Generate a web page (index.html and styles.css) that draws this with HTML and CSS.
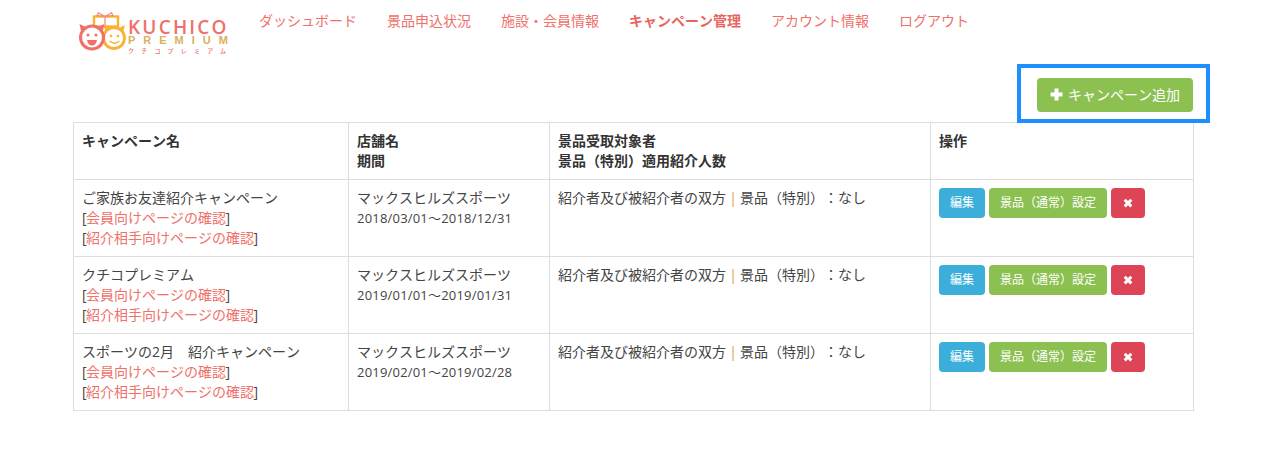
FILE: index.html
```html
<!DOCTYPE html>
<html lang="ja">
<head>
<meta charset="utf-8">
<title>キャンペーン管理</title>
<link rel="stylesheet" href="styles.css">
</head>
<body>
<div class="page">
  <header class="header">
    <a class="logo" href="#">
      <svg class="logo-mark" width="50" height="42" viewBox="0 0 50 42">
        <rect x="16" y="4.5" width="24" height="10" fill="none" stroke="#f9b233" stroke-width="2.4"/>
        <path d="M27 4.5 L20.5 0.8 L19 3.6 L27 4.5 L33.5 0.8 L35 3.6 Z M27 5 V16" fill="none" stroke="#f08a86" stroke-width="1.2"/>
        <circle cx="36" cy="26" r="10.5" fill="#fff" stroke="#f9b233" stroke-width="2.8"/>
        <path d="M26 13 L27.5 20 L32 16 Z M47 13 L45 20 L41 16 Z" fill="#f9b233"/>
        <circle cx="33" cy="24" r="1.3" fill="#f9b233"/>
        <circle cx="40" cy="24" r="1.3" fill="#f9b233"/>
        <path d="M31.5 29 Q36.5 33.5 41.5 29" fill="none" stroke="#f9b233" stroke-width="1.4"/>
        <circle cx="14" cy="25.5" r="11.5" fill="#fff" stroke="#f0706a" stroke-width="3"/>
        <path d="M1.5 12 L3 19 L8 15 Z M26 12 L25 19 L20 15 Z" fill="#f0706a"/>
        <circle cx="10" cy="23" r="1.6" fill="#f0706a"/>
        <circle cx="18" cy="23" r="1.6" fill="#f0706a"/>
        <path d="M9 28 H19 Q18 33.5 14 33.5 Q10 33.5 9 28 Z" fill="#f0706a"/>
      </svg>
      <span class="logo-text">
        <span class="logo-main">KUCHICO</span>
        <span class="logo-sub">PREMIUM</span>
        <span class="logo-kana">クチコプレミアム</span>
      </span>
    </a>
    <nav class="nav">
      <a href="#">ダッシュボード</a>
      <a href="#">景品申込状況</a>
      <a href="#">施設・会員情報</a>
      <a href="#" class="active">キャンペーン管理</a>
      <a href="#">アカウント情報</a>
      <a href="#">ログアウト</a>
    </nav>
  </header>

  <div class="toolbar">
    <a class="btn btn-add" href="#"><svg class="plus" width="13" height="13" viewBox="0 0 13 13"><path d="M4.5 0.5h4v4h4v4h-4v4h-4v-4h-4v-4h4z" fill="#fff"/></svg>キャンペーン追加</a>
    <div class="highlight"></div>
  </div>

  <table class="table">
    <colgroup>
      <col class="c1"><col class="c2"><col class="c3"><col class="c4">
    </colgroup>
    <thead>
      <tr>
        <th>キャンペーン名</th>
        <th>店舗名<br>期間</th>
        <th>景品受取対象者<br>景品（特別）適用紹介人数</th>
        <th>操作</th>
      </tr>
    </thead>
    <tbody>
      <tr>
        <td>ご家族お友達紹介キャンペーン<br>[<a href="#">会員向けページの確認</a>]<br>[<a href="#">紹介相手向けページの確認</a>]</td>
        <td>マックスヒルズスポーツ<br><span class="date">2018/03/01～2018/12/31</span></td>
        <td>紹介者及び被紹介者の双方<span class="sep">|</span>景品（特別）：なし</td>
        <td><div class="ops"><a class="btn btn-sm info" href="#">編集</a><a class="btn btn-sm success" href="#">景品（通常）設定</a><a class="btn btn-sm danger" href="#"><svg width="10" height="10" viewBox="1 1 8 8"><path d="M1.5 3.2L3.2 1.5 5 3.3 6.8 1.5 8.5 3.2 6.7 5 8.5 6.8 6.8 8.5 5 6.7 3.2 8.5 1.5 6.8 3.3 5z" fill="#fff"/></svg></a></div></td>
      </tr>
      <tr>
        <td>クチコプレミアム<br>[<a href="#">会員向けページの確認</a>]<br>[<a href="#">紹介相手向けページの確認</a>]</td>
        <td>マックスヒルズスポーツ<br><span class="date">2019/01/01～2019/01/31</span></td>
        <td>紹介者及び被紹介者の双方<span class="sep">|</span>景品（特別）：なし</td>
        <td><div class="ops"><a class="btn btn-sm info" href="#">編集</a><a class="btn btn-sm success" href="#">景品（通常）設定</a><a class="btn btn-sm danger" href="#"><svg width="10" height="10" viewBox="1 1 8 8"><path d="M1.5 3.2L3.2 1.5 5 3.3 6.8 1.5 8.5 3.2 6.7 5 8.5 6.8 6.8 8.5 5 6.7 3.2 8.5 1.5 6.8 3.3 5z" fill="#fff"/></svg></a></div></td>
      </tr>
      <tr>
        <td>スポーツの2月　紹介キャンペーン<br>[<a href="#">会員向けページの確認</a>]<br>[<a href="#">紹介相手向けページの確認</a>]</td>
        <td>マックスヒルズスポーツ<br><span class="date">2019/02/01～2019/02/28</span></td>
        <td>紹介者及び被紹介者の双方<span class="sep">|</span>景品（特別）：なし</td>
        <td><div class="ops"><a class="btn btn-sm info" href="#">編集</a><a class="btn btn-sm success" href="#">景品（通常）設定</a><a class="btn btn-sm danger" href="#"><svg width="10" height="10" viewBox="1 1 8 8"><path d="M1.5 3.2L3.2 1.5 5 3.3 6.8 1.5 8.5 3.2 6.7 5 8.5 6.8 6.8 8.5 5 6.7 3.2 8.5 1.5 6.8 3.3 5z" fill="#fff"/></svg></a></div></td>
      </tr>
    </tbody>
  </table>
</div>
</body>
</html>
```

FILE: styles.css
```css
* { box-sizing: border-box; }
html, body { margin: 0; padding: 0; background: #fff; }
body {
  font-family: "Open Sans", "Noto Sans CJK JP", sans-serif;
  font-size: 14px;
  line-height: 20px;
  color: #444;
  overflow: hidden;
  font-feature-settings: "chws" 0, "palt" 0, "kern" 0;
  font-kerning: none;
  text-spacing-trim: space-all;
}
a { text-decoration: none; color: #f0706a; }
.page { width: 1120px; margin-left: 73px; }

.header { display: flex; height: 64px; }
.logo { display: flex; flex: none; width: 171px; padding: 12px 0 0 5px; }
.logo-mark { flex: none; }
.logo-text { display: flex; flex-direction: column; padding-top: 7px; }
.logo-main { font: 600 19px/17px "Open Sans", sans-serif; color: #f0706a; letter-spacing: 2.2px; white-space: nowrap; }
.logo-sub { font: 700 11px/9px "Liberation Sans", sans-serif; color: #d9b15c; letter-spacing: 8px; white-space: nowrap; }
.logo-kana { font: 500 6px/7px "Noto Sans CJK JP", sans-serif; color: #f0706a; letter-spacing: 7.2px; margin-top: 2px; white-space: nowrap; }
.nav { display: flex; align-items: flex-start; padding-top: 11px; }
.nav a { padding: 0 15px; white-space: nowrap; }
.nav a.active { font-weight: 700; color: #e8655e; }

.toolbar { position: relative; display: flex; justify-content: flex-end; padding-top: 14px; height: 58px; }
.highlight { position: absolute; left: 944px; top: 0; width: 193px; height: 59px; border: 4px solid #1e8fff; pointer-events: none; }

.btn { display: inline-block; border: 1px solid transparent; border-radius: 4px; color: #fff; white-space: nowrap; }
.btn-add { height: 34px; padding: 6px 12px; background: #8cc152; }
.plus { vertical-align: -1px; margin-right: 5px; }
.btn-sm { height: 30px; padding: 4px 10px; font-size: 12px; line-height: 20px; text-align: center; }
.info { background: #3bafda; }
.success { background: #8cc152; }
.danger { background: #dd4455; width: 34px; padding-left: 0; padding-right: 0; }
.danger svg { vertical-align: -1px; }
.ops { display: flex; gap: 4px; height: 60px; }

.table { width: 1120px; border-collapse: collapse; table-layout: fixed; }
.c1 { width: 275px; }
.c2 { width: 201px; }
.c3 { width: 381px; }
.c4 { width: 263px; }
.table th, .table td { border: 1px solid #ddd; padding: 8px; vertical-align: top; text-align: left; }
.table th { font-weight: 700; color: #333; }
.table td a:not(.btn) { margin: 0 -0.5px; }
.date { font-size: 13px; letter-spacing: 0.2px; }
.sep { display: inline-block; width: 14px; text-align: center; color: #e09a3e; }
```
